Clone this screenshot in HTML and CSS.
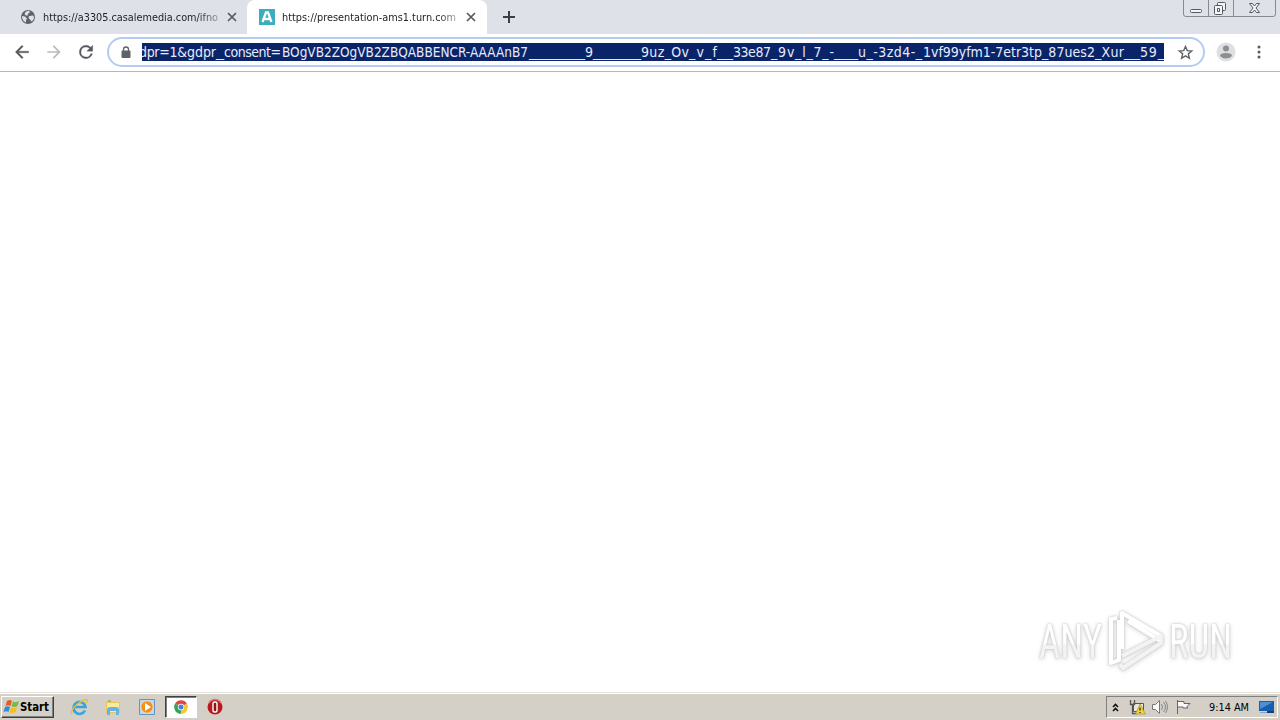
FILE: index.html
```html
<!DOCTYPE html>
<html lang="en">
<head>
<meta charset="utf-8">
<title>Browser window</title>
<link rel="stylesheet" href="styles.css">
</head>
<body>
<div class="screen">
  <header class="tabstrip">
    <div class="tab tab-idle">
      <svg class="favicon" viewBox="0 0 16 16"><circle cx="8" cy="8" r="7" fill="#5f6368"/><path d="M2 7l3 .5 2 2-1 1.500v2.500C3.500 12.500 2 10.500 2 7zM6 2.500l3-.8 1 1.500-2 1.500-.5 2-2-.5L4.500 5zM9 7l4-.5 1 1.500c0 2-1 3.500-2.500 4.500L10 10.500 8.500 9z" fill="#dee1e8"/></svg>
      <svg class="tab-title" viewBox="0 0 178 20"><text x="0" y="13.500" textLength="175" lengthAdjust="spacingAndGlyphs">https://a3305.casalemedia.com/ifno</text></svg>
      <svg class="close" viewBox="0 0 10 10"><path d="M1 1l8 8M9 1l-8 8"/></svg>
    </div>
    <div class="tab tab-active">
      <svg class="favicon" viewBox="0 0 16 16"><path fill="#3aaebc" d="M0 0h16v16H0z"/><path d="M3.500 13L7 3.500h2L12.500 13M5.500 10h5" fill="none" stroke="#fff" stroke-width="2.300"/></svg>
      <svg class="tab-title" viewBox="0 0 178 20"><text x="0" y="13.500" textLength="174" lengthAdjust="spacingAndGlyphs">https://presentation-ams1.turn.com</text></svg>
      <svg class="close" viewBox="0 0 10 10"><path d="M1 1l8 8M9 1l-8 8"/></svg>
    </div>
    <svg class="plus" viewBox="0 0 14 14"><path d="M7 1v12M1 7h12" stroke="#3c4043" stroke-width="2"/></svg>
    <svg class="window-buttons" viewBox="0 0 96 18">
      <path d="M.5 0v14q0 2.500 2.500 2.500h87q2.500 0 2.500-2.500V0M25.500 0v16M50.500 0v16" fill="none" stroke="#868a92"/>
      <g fill="#f4f5f7" stroke="#555961"><rect x="7.500" y="9.500" width="11" height="3" rx="1"/><rect x="34.500" y="2.500" width="8" height="8" rx="1"/><rect x="31.500" y="5.500" width="8" height="9" rx="1"/><path d="M34.500 8.500h2v3h-2z"/><path d="M66.500 3.500h3l2 2.500 2-2.500h3L73 8l3.500 4.500h-3l-2-2.500-2 2.500h-3L70 8z"/></g>
    </svg>
  </header>

  <nav class="toolbar">
    <svg class="nav-icon" viewBox="0 0 24 24"><path d="M20 11H7.830l5.590-5.590L12 4l-8 8 8 8 1.410-1.410L7.830 13H20z" fill="#55585c" stroke="#55585c" stroke-width=".4"/></svg>
    <svg class="nav-icon" viewBox="0 0 24 24"><path d="M12 4l-1.410 1.410L16.170 11H4v2h12.170l-5.580 5.590L12 20l8-8z" fill="#b9bbbe"/></svg>
    <svg class="nav-icon" viewBox="0 0 24 24"><path d="M17.650 6.350A7.960 7.960 0 0 0 12 4a8 8 0 1 0 7.730 10h-2.080A6 6 0 1 1 12 6c1.660 0 3.140.69 4.220 1.780L13 11h7V4z" fill="#55585c" stroke="#55585c" stroke-width=".4"/></svg>
    <div class="omnibox">
      <svg class="lock" viewBox="0 0 10 13"><path d="M2.500 6V3.500a2.500 2.500 0 0 1 5 0V6" fill="none" stroke="#5f6368" stroke-width="1.300"/><rect x=".5" y="4.500" width="9" height="7.500" rx="1" fill="#5f6368"/></svg>
      <svg class="url" viewBox="142 43 1022 18">
        <text x="139" y="57" textLength="48">dpr=1&amp;</text>
        <text x="187" y="57" textLength="29">gdpr</text>
        <text x="216" y="57" textLength="8" lengthAdjust="spacingAndGlyphs">_</text>
        <text x="224" y="57" textLength="57">consent=</text>
        <text x="282" y="57" textLength="246" lengthAdjust="spacingAndGlyphs">BOgVB2ZOgVB2ZBQABBENCR-AAAAnB7</text>
        <text x="529" y="57" textLength="56" lengthAdjust="spacingAndGlyphs">_______</text>
        <text x="585" y="57">9</text>
        <text x="593" y="57" textLength="48" lengthAdjust="spacingAndGlyphs">______</text>
        <text x="641" y="57" textLength="48">9uz_Ov</text>
        <text x="689" y="57" textLength="28">_v_f</text>
        <text x="717" y="57" textLength="16" lengthAdjust="spacingAndGlyphs">__</text>
        <text x="733" y="57" textLength="38">33e87</text>
        <text x="771" y="57" textLength="63">_9v_l_7_-</text>
        <text x="834" y="57" textLength="24" lengthAdjust="spacingAndGlyphs">___</text>
        <text x="858" y="57" textLength="64">u_-3zd4-_</text>
        <text x="923" y="57" textLength="119">1vf99yfm1-7etr3tp</text>
        <text x="1042" y="57" textLength="53">_87ues2</text>
        <text x="1095" y="57" textLength="29">_Xur</text>
        <text x="1124" y="57" textLength="16" lengthAdjust="spacingAndGlyphs">__</text>
        <text x="1140" y="57" textLength="24">59_</text>
      </svg>
      <svg class="star" viewBox="0 0 24 24"><path d="M12 3.500l2.500 5.800 6.300.5-4.800 4.100 1.500 6.200-5.500-3.300-5.500 3.300L8 13.900 3.200 9.800l6.300-.5z" fill="none" stroke="#5f6368" stroke-width="2"/></svg>
    </div>
    <svg class="avatar" viewBox="0 0 20 20"><circle cx="10" cy="10" r="9.500" fill="#dedfe0"/><circle cx="10" cy="6.500" r="3" fill="#8b8e92"/><path d="M4 14q0-3 6-3t6 3q-2.500 2.500-6 2.500T4 14z" fill="#8b8e92"/></svg>
    <svg class="menu" viewBox="0 0 4 16"><g fill="#55585c"><circle cx="2" cy="3" r="1.500"/><circle cx="2" cy="8" r="1.500"/><circle cx="2" cy="13" r="1.500"/></g></svg>
  </nav>

  <main class="page">
    <svg class="watermark" viewBox="1020 600 230 80">
      <defs>
        <linearGradient id="fade" x1="0" y1="0" x2="0" y2="1"><stop offset=".54" stop-color="#fff"/><stop offset=".56" stop-color="#f3f3f3"/></linearGradient>
      </defs>
      <g fill="url(#fade)">
        <text x="1039" y="658" textLength="63" lengthAdjust="spacingAndGlyphs">ANY</text>
        <text x="1169" y="658" textLength="63" lengthAdjust="spacingAndGlyphs">RUN</text>
      </g>
      <g fill="none" stroke="#fff" stroke-width="4" stroke-linejoin="round">
        <path d="M1117 618l-6 1v44l8-3v-40"/>
        <path d="M1122 649v-36l39 23-2 4-31-19"/>
        <path d="M1122 656l39-20v7l-38 25-3-4" stroke="#f3f3f3"/>
      </g>
    </svg>
  </main>

  <footer class="taskbar">
    <div class="start">
      <svg class="flag" viewBox="0 0 17 16"><path d="M4 2q3-2 5 0L7.500 7q-2.500-1.500-5 0z" fill="#e75b25"/><path d="M10 2.500q3 1.500 6-.5L14.500 7q-3 2-6 .3z" fill="#79b943"/><path d="M2 8q3-1.500 5 0l-1.500 5q-2-1.500-5 0z" fill="#328bd2"/><path d="M8.200 8.300q3 1.500 6-.2L12.500 13q-3 2-6 .3z" fill="#f6bd22"/></svg>
      <svg class="start-label" viewBox="0 0 30 16"><text x="0" y="12" textLength="29" lengthAdjust="spacingAndGlyphs">Start</text></svg>
    </div>
    <div class="quick">
      <svg viewBox="0 0 18 18"><path d="M15 12.500A6 6 0 1 1 15.500 9H5" fill="none" stroke="#35a5df" stroke-width="2.600"/><path d="M2 16C-1 11 15-1 17 2q.5 1-1 3" fill="none" stroke="#ecbd36" stroke-width="1.500"/></svg>
    </div>
    <div class="quick">
      <svg viewBox="0 0 18 18"><path d="M2 3h5l1 1h8v11H2z" fill="#e9c55c"/><path d="M3 5h12v9H3z" fill="#faeaa0"/><path d="M3 17v-5q0-3 3-3h6q3 0 3 3v5h-3v-4H6v4z" fill="#65b5df"/><path d="M4 3h3" stroke="#55b963"/></svg>
    </div>
    <div class="quick">
      <svg viewBox="0 0 18 18"><path d="M1.500 1.500h15v15h-15z" fill="#b9d8f2" stroke="#6294c8"/><circle cx="9" cy="9" r="6.200" fill="#ee9120" stroke="#fff1d0" stroke-width=".7"/><path d="M7 5l6 4-6 4z" fill="#fff"/></svg>
    </div>
    <div class="quick quick-active">
      <svg viewBox="0 0 18 18"><path d="M9 9L3.100 5.600A6.800 6.800 0 0 1 14.900 5.600z" fill="#df493b"/><path d="M9 9V15.800A6.800 6.800 0 0 1 3.100 5.600z" fill="#35a457"/><path d="M9 9l5.900-3.400A6.800 6.800 0 0 1 9 15.800z" fill="#f3c832"/><circle cx="9" cy="9" r="3.200" fill="#fff"/><circle cx="9" cy="9" r="2.500" fill="#4381dd"/></svg>
    </div>
    <div class="quick">
      <svg viewBox="0 0 18 18"><circle cx="9" cy="9" r="7.500" fill="#b61a1d"/><path d="M3 5a7 7 0 0 1 12 0" fill="none" stroke="#dc7470" stroke-width="1.500"/><rect x="7" y="4" width="4" height="10" rx="1.800" fill="#8d1418" stroke="#fff" stroke-width="1.400"/></svg>
    </div>
    <div class="tray">
      <svg class="chevrons" viewBox="0 0 7 9"><path d="M1 4l2.500-2.500L6 4M1 8l2.500-2.500L6 8" fill="none" stroke="#111" stroke-width="1.600"/></svg>
      <svg class="tray-icon" viewBox="0 0 18 18"><path d="M5.500 5.500h10v8h-10z" fill="#e7e7df" stroke="#555"/><path d="M2.500 2v4.500h4V2M4.500 7v8.500h4" fill="none" stroke="#555" stroke-width="1.300"/><path d="M12 6l5.500 10h-10z" fill="#f5d42d" stroke="#9a8524" stroke-width=".6"/><path d="M12 9.500v3M12 14v1" stroke="#222" stroke-width="1.200"/></svg>
      <svg class="tray-icon" viewBox="0 0 18 18"><path d="M1.500 6.500h3l4-4v13l-4-4h-3z" fill="#f8f8f8" stroke="#777"/><path d="M10.500 6q2 3 0 6M12.500 4q4 5 0 10M14.500 3q4 6 0 12" fill="none" stroke="#888"/></svg>
      <svg class="tray-icon" viewBox="0 0 18 18"><path d="M3.500 2v14M4 3.500h6v2h6l-3 3 1 1.500H9V9H4" fill="#f8f8f8" stroke="#666"/></svg>
      <svg class="clock" viewBox="0 0 42 16"><text x="0" y="12" textLength="40" lengthAdjust="spacingAndGlyphs">9:14 AM</text></svg>
      <svg class="desktop" viewBox="0 0 16 14"><path d="M0 1h15v10H0z" fill="#175eac"/><path d="M1 2h13L1 9z" fill="#4b91d4"/><path d="M1 12h7v1H1z" fill="#80a6ce"/><path d="M8 11h7v2H8z" fill="#143d70"/></svg>
    </div>
  </footer>
</div>
</body>
</html>
```
FILE: styles.css
```css
* { box-sizing: border-box; }
body {
  margin: 0;
  font-family: "DejaVu Sans Condensed", "DejaVu Sans", sans-serif;
  font-stretch: condensed;
  background: #fff;
}
svg { display: block; flex: none; }
.screen { width: 1280px; height: 720px; display: flex; flex-direction: column; overflow: hidden; }
.tabstrip { height: 34px; flex: none; display: flex; background: #dee1e8; }
.tab { height: 34px; display: flex; align-items: center; }
.tab-idle { width: 247px; padding-left: 20px; }
.tab-active { width: 240px; padding-left: 12px; border-radius: 8px 8px 0 0; background: #fff; }
.favicon { width: 16px; height: 16px; }
.tab-title {
  width: 178px; height: 20px; margin-left: 7px; font-size: 11px; fill: #202327;
  mask-image: linear-gradient(90deg, #000 155px, #0005 176px);
}
.close { width: 10px; height: 10px; margin-left: 6px; fill: none; stroke: #55585c; stroke-width: 1.7; }
.plus { width: 14px; height: 14px; margin: 10px 0 0 15px; }
.window-buttons { width: 96px; height: 18px; margin-left: auto; margin-right: 1px; }

.toolbar {
  height: 38px; flex: none; display: flex; align-items: center;
  padding: 0 0 1px 12px; border-bottom: 1px solid #b6b7b9; background: #fff;
}
.nav-icon { width: 20px; height: 20px; margin-right: 12px; }
.omnibox {
  width: 1098px; height: 30px; margin-left: -1px; display: flex; align-items: center;
  border: 2px solid #b3ccf3; border-radius: 15px;
}
.lock { width: 10px; height: 13px; margin-left: 12px; }
.url { width: 1022px; height: 18px; margin-left: 11px; background: #0a246a; font-size: 14px; fill: #e6ecfa; }
.star { width: 17px; height: 17px; margin-left: 13px; }
.avatar { width: 20px; height: 20px; margin-left: 11px; }
.menu { width: 4px; height: 16px; margin-left: 21px; }

.page { flex: 1; display: flex; justify-content: flex-end; align-items: flex-end; padding: 0 30px 12px 0; }
.watermark {
  width: 230px; height: 80px; overflow: visible; font-family: Roboto, sans-serif; font-size: 48px;
  filter: drop-shadow(0 0 1px #c4c4c4) drop-shadow(0 1px 2px #d8d8d8);
}

.taskbar {
  height: 28px; flex: none; display: flex; align-items: center;
  background: #d4d0c8; border-top: 1px solid #e4e1da; box-shadow: inset 0 1px #fff;
}
.start {
  width: 53px; height: 22px; margin: 1px 9px 0 1px; display: flex; align-items: center;
  border: 1px solid; border-color: #fff #404040 #404040 #fff; box-shadow: inset -1px -1px #808080;
}
.flag { width: 17px; height: 16px; margin-left: 1px; }
.start-label { width: 30px; height: 16px; font-size: 12px; font-weight: bold; }
.quick { width: 32px; height: 22px; margin: 1px 2px 0 0; display: flex; align-items: center; justify-content: center; }
.quick svg { width: 18px; height: 18px; }
.quick-active { background: #fff; border: 1px solid; border-color: #404040 #fff #fff #404040; box-shadow: inset 1px 1px #808080; }
.tray {
  width: 172px; height: 22px; margin: 1px 2px 0 auto; display: flex; align-items: center;
  border: 1px solid; border-color: #808080 #fff #fff #808080; padding-left: 5px;
}
.chevrons { width: 7px; height: 9px; margin-right: 9px; }
.tray-icon { width: 18px; height: 18px; margin-right: 6px; }
.tray-icon + .tray-icon { margin-left: -1px; }
.clock { width: 42px; height: 16px; margin-left: 11px; font-size: 11px; }
.desktop { width: 16px; height: 14px; margin-left: 8px; }
```
